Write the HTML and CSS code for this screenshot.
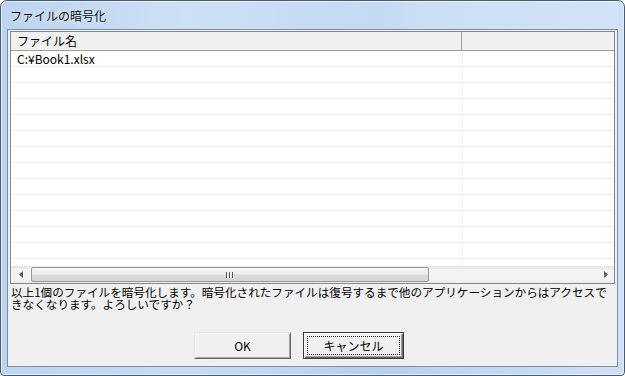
FILE: index.html
```html
<!DOCTYPE html>
<html lang="ja">
<head>
<meta charset="utf-8">
<title>ファイルの暗号化</title>
<link rel="stylesheet" href="styles.css">
</head>
<body>
<div class="window">
  <div class="titlebar">ファイルの暗号化</div>
  <div class="client">
    <div class="listview">
      <div class="header">
        <div class="hcol hcol-name">ファイル名</div>
        <div class="hcol hcol-rest"></div>
      </div>
      <div class="rows">
        <div class="row"><div class="cell cell-name">C:¥Book1.xlsx</div><div class="cell cell-rest"></div></div>
        <div class="row"><div class="cell cell-name"></div><div class="cell cell-rest"></div></div>
        <div class="row"><div class="cell cell-name"></div><div class="cell cell-rest"></div></div>
        <div class="row"><div class="cell cell-name"></div><div class="cell cell-rest"></div></div>
        <div class="row"><div class="cell cell-name"></div><div class="cell cell-rest"></div></div>
        <div class="row"><div class="cell cell-name"></div><div class="cell cell-rest"></div></div>
        <div class="row"><div class="cell cell-name"></div><div class="cell cell-rest"></div></div>
        <div class="row"><div class="cell cell-name"></div><div class="cell cell-rest"></div></div>
        <div class="row"><div class="cell cell-name"></div><div class="cell cell-rest"></div></div>
        <div class="row"><div class="cell cell-name"></div><div class="cell cell-rest"></div></div>
        <div class="row"><div class="cell cell-name"></div><div class="cell cell-rest"></div></div>
        <div class="row"><div class="cell cell-name"></div><div class="cell cell-rest"></div></div>
        <div class="row"><div class="cell cell-name"></div><div class="cell cell-rest"></div></div>
        <div class="row"><div class="cell cell-name"></div><div class="cell cell-rest"></div></div>
      </div>
      <div class="hscroll">
        <div class="arrow arrow-left"><svg width="4" height="7" viewBox="0 0 4 7"><path d="M4 0 L0 3.5 L4 7 Z" fill="#5c5c5c"/></svg></div>
        <div class="track">
          <div class="thumb"><span class="grip"></span><span class="grip"></span><span class="grip"></span></div>
        </div>
        <div class="arrow arrow-right"><svg width="4" height="7" viewBox="0 0 4 7"><path d="M0 0 L4 3.5 L0 7 Z" fill="#5c5c5c"/></svg></div>
      </div>
    </div>
    <p class="message">以上1個のファイルを暗号化します。暗号化されたファイルは復号するまで他のアプリケーションからはアクセスできなくなります。よろしいですか？</p>
    <div class="buttons">
      <button class="btn btn-ok">OK</button>
      <button class="btn btn-cancel"><span class="focus">キャンセル</span></button>
    </div>
  </div>
</div>
</body>
</html>
```

FILE: styles.css
```css
html, body {
  margin: 0;
  padding: 0;
  background: #ffffff;
}
body {
  width: 625px;
  height: 376px;
  overflow: hidden;
  font-family: "Noto Sans CJK JP", "Liberation Sans", sans-serif;
  font-size: 12px;
  color: #000;
}
.window {
  box-sizing: border-box;
  width: 625px;
  height: 376px;
  border: 1px solid #4a5b70;
  border-radius: 7px 7px 4px 4px;
  background: linear-gradient(90deg, #bcd4ef 0%, #c7dcf4 30%, #b4d0f0 60%, #cfe1f6 100%);
  padding: 0 6px 8px 6px;
  display: flex;
  flex-direction: column;
  box-shadow: inset 0 0 0 1px #e4eefa;
}
.titlebar {
  height: 28px;
  line-height: 29px;
  padding-left: 3px;
  font-size: 12px;
  color: #111;
  text-shadow: 0 0 6px rgba(255,255,255,0.9);
  background: linear-gradient(90deg, rgba(255,255,255,0) 0%, rgba(255,255,255,0.25) 70%, rgba(255,255,255,0.1) 100%);
}
.client {
  flex: 1;
  background: #f0f0f0;
  border: 1px solid #7d8ea3;
  display: flex;
  flex-direction: column;
}
.listview {
  margin: 1px 2px 0 2px;
  height: 253px;
  box-sizing: border-box;
  border: 1px solid #828790;
  background: #fff;
  display: flex;
  flex-direction: column;
}
.header {
  display: flex;
  height: 18px;
  background: #f0f0f0;
  border-bottom: 1px solid #a0a0a0;
  flex: none;
}
.hcol {
  line-height: 18px;
  font-size: 12px;
}
.hcol-name {
  width: 444px;
  padding-left: 6px;
  border-right: 1px solid #a0a0a0;
}
.hcol-rest {
  flex: 1;
}
.rows {
  flex: 1;
  overflow: hidden;
}
.row {
  display: flex;
  height: 16px;
  box-sizing: border-box;
  border-bottom: 1px solid #f0f0f0;
}
.cell {
  line-height: 15px;
  font-size: 12px;
}
.cell-name {
  width: 445px;
  padding-left: 6px;
  border-right: 1px solid #f0f0f0;
}
.cell-rest {
  flex: 1;
}
.hscroll {
  flex: none;
  height: 17px;
  display: flex;
  align-items: center;
  background: linear-gradient(180deg, #e3e3e3 0%, #f3f3f3 25%, #f3f3f3 75%, #ececec 100%);
}
.arrow {
  width: 17px;
  height: 17px;
  display: flex;
  align-items: center;
  justify-content: center;
  flex: none;
}
.arrow-left {
  width: 20px;
}
.track {
  flex: 1;
  height: 17px;
  display: flex;
  align-items: center;
}
.thumb {
  box-sizing: border-box;
  width: 398px;
  height: 15px;
  border: 1px solid #979797;
  border-radius: 2px;
  background: linear-gradient(180deg, #f7f7f7 0%, #ececec 45%, #dcdcdc 55%, #d6d6d6 100%);
  display: flex;
  align-items: center;
  justify-content: center;
  gap: 1px;
}
.grip {
  width: 1px;
  height: 6px;
  background: #555;
  box-shadow: 1px 0 0 #fff;
  margin-right: 1px;
}
.message {
  margin: 2px 0 0 3px;
  width: 603px;
  font-size: 11.6px;
  line-height: 12px;
  word-break: break-all;
}
.buttons {
  display: flex;
  gap: 12px;
  padding-left: 186px;
  margin-top: 22px;
}
.btn {
  box-sizing: border-box;
  height: 27px;
  font-family: "Noto Sans CJK JP", "Liberation Sans", sans-serif;
  font-size: 12px;
  color: #000;
  background: #f0f0f0;
  padding: 0;
  margin: 0;
}
.btn-ok {
  width: 97px;
  border-style: solid;
  border-width: 1px;
  border-color: #e3e3e3 #696969 #696969 #e3e3e3;
  box-shadow: inset 1px 1px 0 #ffffff, inset -1px -1px 0 #a0a0a0;
}
.btn-cancel {
  width: 101px;
  border: 1px solid #3a3a3a;
  box-shadow: inset 1px 1px 0 #ffffff, inset -1px -1px 0 #696969, inset -2px -2px 0 #a0a0a0;
  display: flex;
  padding: 3px;
}
.focus {
  flex: 1;
  border: 1px dotted #222;
  display: flex;
  align-items: center;
  justify-content: center;
}
```
